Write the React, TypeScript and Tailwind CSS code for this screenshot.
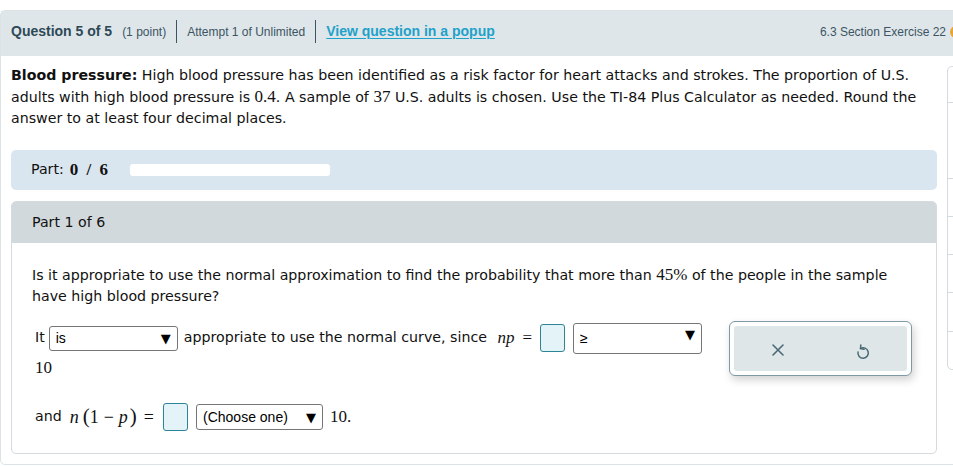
import React from 'react';

const serif = "font-['Liberation_Serif','DejaVu_Serif',serif]";

function Select({ value, className }: { value: string; className: string }) {
  return (
    <div
      className={`flex shrink-0 items-center justify-between rounded-[3px] border border-[#767676] bg-white pl-[6px] pr-[6px] font-['Liberation_Sans',Arial,sans-serif] text-[14px] text-black ${className}`}
    >
      <span>{value}</span>
      <span className="font-['DejaVu_Sans',sans-serif] text-[13px] leading-none">▼</span>
    </div>
  );
}

function AnswerBox() {
  return <div className="h-[28px] w-[25px] shrink-0 rounded-[3px] border-[1.5px] border-[#2c8597] bg-[#e4f3f8]" />;
}

function ToolBox() {
  return (
    <div className="ml-[27px] -mt-[1px] h-[55px] w-[183px] shrink-0 rounded-[6px] border-[1.5px] border-[#7d9aa5] bg-white p-[4px] shadow-[2px_4px_8px_rgba(0,0,0,0.18)]">
      <div className="flex h-full items-center rounded-[3px] bg-[#dfe6e8] pl-[37px] pt-[2px]">
        <svg width="14" height="14" viewBox="0 0 14 14">
          <path d="M2 2 L12 12 M12 2 L2 12" stroke="#4a6a77" strokeWidth="1.6" strokeLinecap="round" />
        </svg>
        <svg width="16" height="18" viewBox="0 0 16 18" className="ml-[70px] mt-[4px]">
          <path
            d="M5.5 5.5 A5.2 5.2 0 1 1 3 9"
            fill="none"
            stroke="#4a6a77"
            strokeWidth="1.5"
            strokeLinecap="round"
          />
          <path d="M5.8 2 L5.5 5.6 L9 6.3" fill="none" stroke="#4a6a77" strokeWidth="1.5" strokeLinecap="round" strokeLinejoin="round" />
        </svg>
      </div>
    </div>
  );
}

export default function App() {
  return (
    <div className="h-[466px] w-[953px] overflow-hidden bg-white pt-[10px]">
      <div className="h-[455px] w-[1020px] rounded-l-[5px] border border-[#dce3e6]">
        {/* header */}
        <div className="flex h-[45px] items-center bg-[#dfe6e9] pb-[4px] font-['Liberation_Sans',Arial,sans-serif] text-[#3b5564]">
          <div className="flex w-[945px] shrink-0 items-center pl-[10px]">
            <span className="text-[14px] font-bold text-[#2d4957]">Question 5 of 5</span>
            <span className="ml-[10px] text-[12px]">(1 point)</span>
            <span className="mx-[10px] h-[23px] w-px bg-[#3b5564]" />
            <span className="text-[12px]">Attempt 1 of Unlimited</span>
            <span className="mx-[10px] h-[23px] w-px bg-[#3b5564]" />
            <span className="text-[14px] font-bold text-[#1ea2c9] underline underline-offset-2 [text-decoration-thickness:1px]">
              View question in a popup
            </span>
            <span className="ml-auto text-[12px]">6.3 Section Exercise 22</span>
          </div>
          <span className="ml-[4px] h-[12px] w-[12px] shrink-0 rounded-full bg-[#e8a33a]" />
        </div>

        <div className="flex font-['DejaVu_Sans',Verdana,sans-serif] text-[14.2px] text-[#111]">
          <div className="ml-[10px] w-[926px] shrink-0">
            <p className="pt-[9px] leading-[21px]">
              <b>Blood pressure:</b> High blood pressure has been identified as a risk factor for heart attacks and strokes. The
              proportion of U.S. adults with high blood pressure is <span className={`${serif} text-[17px]`}>0.4</span>. A sample of{' '}
              <span className={`${serif} text-[17px]`}>37</span> U.S. adults is chosen. Use the TI-84 Plus Calculator as needed. Round the
              answer to at least four decimal places.
            </p>

            <div className="mt-[21px] flex h-[40px] items-center rounded-[5px] bg-[#dae6ef] pl-[20px]">
              <span>Part:</span>
              <span className={`${serif} ml-[6px] text-[17px] font-bold`}>
                0 <span className="mx-[4px]">/</span> 6
              </span>
              <span className="ml-[22px] h-[12px] w-[200px] rounded-[3px] bg-white" />
            </div>

            <div className="mt-[11px] h-[253px] overflow-hidden rounded-[5px] border border-[#d3dbde]">
              <div className="flex h-[41px] items-center bg-[#d1d9dc] pl-[20px]">Part 1 of 6</div>
              <div className="pl-[20px] pr-[20px]">
                <p className="pt-[21px] leading-[21px]">
                  Is it appropriate to use the normal approximation to find the probability that more than{' '}
                  <span className={`${serif} text-[17px]`}>45%</span> of the people in the sample have high blood pressure?
                </p>

                <div className="mt-[15px] flex items-start pl-[3px]">
                  <div className="w-[667px] shrink-0">
                    <div className="flex h-[32px] items-center whitespace-nowrap">
                      <span>It</span>
                      <Select value="is" className="ml-[4px] h-[25px] w-[129px] pl-[4px]" />
                      <span className="ml-[6px]">appropriate to use the normal curve, since</span>
                      <span className={`${serif} ml-auto text-[17px] italic`}>np</span>
                      <span className={`${serif} ml-[8px] text-[17px]`}>=</span>
                      <span className="ml-[8px]">
                        <AnswerBox />
                      </span>
                      <Select value="≥" className="ml-[8px] h-[31px] w-[129px] items-start pt-[4px]" />
                    </div>
                    <div className={`${serif} mt-[4px] text-[17px] leading-[20px]`}>10</div>
                  </div>
                  <ToolBox />
                </div>

                <div className="mt-[24px] flex h-[30px] items-center pl-[3px]">
                  <span>and</span>
                  <span className={`${serif} ml-[8px] flex items-center text-[18px]`}>
                    <i>n</i>
                    <span className="ml-[4px] text-[21px]">(</span>
                    <span>1</span>
                    <span className="mx-[5px]">−</span>
                    <i>p</i>
                    <span className="ml-[2px] text-[21px]">)</span>
                  </span>
                  <span className={`${serif} ml-[7px] text-[18px]`}>=</span>
                  <span className="ml-[9px]">
                    <AnswerBox />
                  </span>
                  <Select value="(Choose one)" className="ml-[8px] h-[26px] w-[127px] pl-[4px]" />
                  <span className={`${serif} ml-[7px] text-[17px]`}>10.</span>
                </div>
              </div>
            </div>
          </div>

          <div className="ml-[10px] mt-[10px] h-[304px] w-[60px] shrink-0 rounded-tl-[5px] rounded-bl-[5px] border border-[#d3dbde]">
            <div className="mt-[35px] h-px w-full bg-[#d3dbde]" />
            <div className="mt-[75px] h-px w-full bg-[#d3dbde]" />
            <div className="mt-[37px] h-px w-full bg-[#d3dbde]" />
            <div className="mt-[37px] h-px w-full bg-[#d3dbde]" />
            <div className="mt-[37px] h-px w-full bg-[#d3dbde]" />
            <div className="mt-[38px] h-px w-full bg-[#d3dbde]" />
          </div>
        </div>
      </div>
    </div>
  );
}
